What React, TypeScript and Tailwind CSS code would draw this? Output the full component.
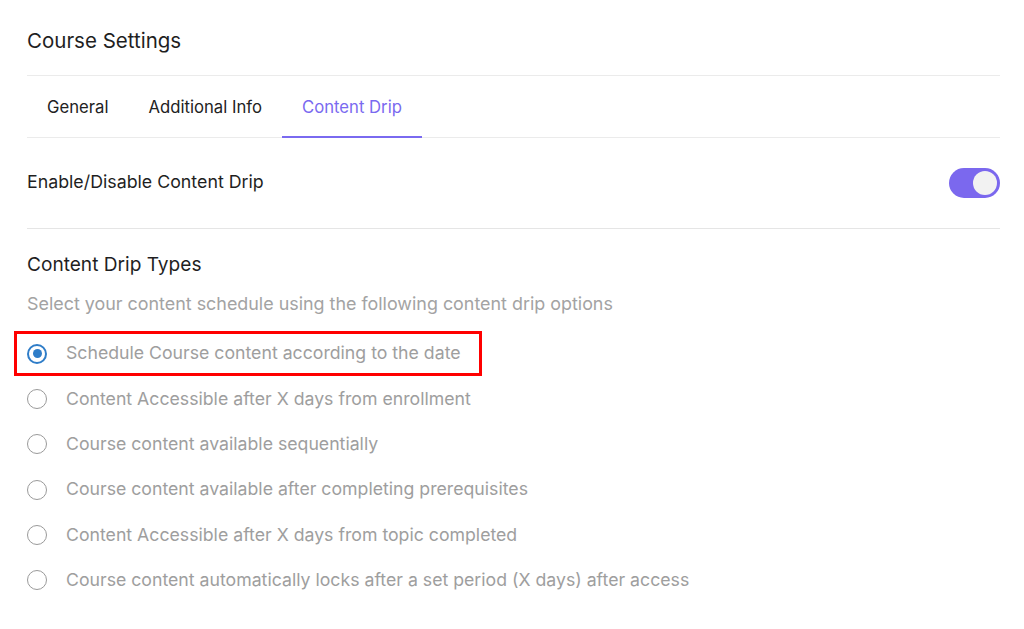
import React, { useState } from 'react';

const OPTIONS = [
    'Schedule Course content according to the date',
    'Content Accessible after X days from enrollment',
    'Course content available sequentially',
    'Course content available after completing prerequisites',
    'Content Accessible after X days from topic completed',
    'Course content automatically locks after a set period (X days) after access',
];

const TABS = ['General', 'Additional Info', 'Content Drip'];

export default function App() {
    const [tab, setTab] = useState('Content Drip');
    const [enabled, setEnabled] = useState(true);
    const [selected, setSelected] = useState(0);

    return (
        <div className="w-[1024px] h-[629px] bg-white font-['Inter',sans-serif] overflow-hidden">
            <div className="ml-[27px] mr-[24px]">
                <div className="h-[76px] pt-[28px] border-b border-[#ebebeb]">
                    <h1 className="text-[20.5px] leading-[26px] text-[#1f1f1f]">Course Settings</h1>
                </div>

                <div className="flex border-b border-[#ebebeb] h-[62px]">
                    {TABS.map((t) => (
                        <button
                            key={t}
                            onClick={() => setTab(t)}
                            className={`px-[20px] pt-[4px] text-[16.7px] -mb-px border-b-2 ${
                                tab === t ? 'text-[#7a6af0] border-[#7a6af0]' : 'text-[#222] border-transparent'
                            }`}
                        >
                            {t}
                        </button>
                    ))}
                </div>

                <div className="flex items-center justify-between h-[91px] border-b border-[#e5e5e5]">
                    <span className="text-[17.8px] -mt-[2px] text-[#1f1f1f]">Enable/Disable Content Drip</span>
                    <button
                        onClick={() => setEnabled(!enabled)}
                        className={`w-[51px] h-[30px] rounded-full flex items-center px-[3px] ${
                            enabled ? 'bg-[#7b68ee] justify-end' : 'bg-[#d1d5db] justify-start'
                        }`}
                    >
                        <span className="w-[24px] h-[24px] rounded-full bg-[#f2f2f2]" />
                    </button>
                </div>

                <h2 className="mt-[23px] text-[19.1px] leading-[24px] text-[#1f1f1f]">Content Drip Types</h2>
                <p className="mt-[17px] text-[17.9px] leading-[22px] text-[#a3a3a3]">
                    Select your content schedule using the following content drip options
                </p>

                <div className="mt-[16px] flex flex-col">
                    {OPTIONS.map((o, i) => (
                        <label
                            key={o}
                            onClick={() => setSelected(i)}
                            className="flex items-center h-[45.3px] cursor-pointer"
                        >
                            <div
                                className={`flex items-center gap-[19px] h-[39px] ${
                                    i === 0 ? 'outline-[3px] outline-[#ff0000] -ml-[10px] pl-[10px] w-[462px]' : ''
                                }`}
                            >
                                <span
                                    className={`w-[20px] h-[20px] rounded-full flex items-center justify-center shrink-0 ${
                                        selected === i ? 'border-2 border-[#2f7dc8]' : 'border border-[#9a9a9a]'
                                    }`}
                                >
                                    {selected === i && <span className="w-[9px] h-[9px] rounded-full bg-[#2f7dc8]" />}
                                </span>
                                <span className="text-[17.7px] text-[#9e9e9e] whitespace-nowrap">{o}</span>
                            </div>
                        </label>
                    ))}
                </div>
            </div>
        </div>
    );
}
